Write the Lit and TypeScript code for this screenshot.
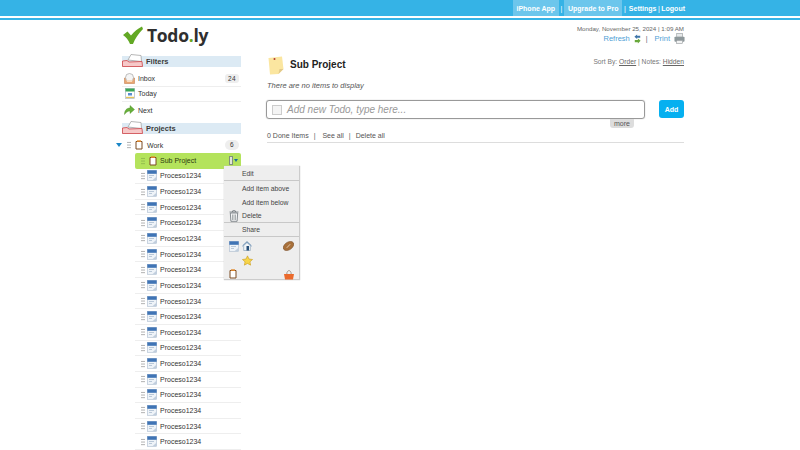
import { LitElement, html, css, svg } from 'lit';
import { customElement } from 'lit/decorators.js';

const folderIcon = html`<svg class="folder" width="21" height="13" viewBox="0 0 21 13">
  <path d="M6 6 L9 0.500 L19 1.500 L19.500 7.500 Z" fill="#fff" stroke="#9a9a9a" stroke-width="0.700"/>
  <path d="M0.500 12.500 L0.500 7 L5 6.500 L7 8 L20 7.500 L20.500 12.500 Z" fill="#f6c9c9" stroke="#cf4145" stroke-width="0.800"/>
</svg>`;

const inboxIcon = html`<svg width="11" height="11" viewBox="0 0 11 11">
  <path d="M0.500 5 L10.500 5 L10.500 10.500 L0.500 10.500 Z" fill="#e8a672" stroke="#c48150" stroke-width="0.600"/>
  <circle cx="5.500" cy="4.500" r="4" fill="#f5f5f5" stroke="#a5a5a5" stroke-width="0.700"/>
  <path d="M2.500 7 L8.500 7 L8 9 L3 9 Z" fill="#f8dcc0"/>
</svg>`;

const todayIcon = html`<svg width="10" height="11" viewBox="0 0 10 11">
  <rect x="0.500" y="0.500" width="9" height="10" fill="#fff" stroke="#9ab" stroke-width="0.600"/>
  <rect x="0.500" y="0.500" width="9" height="3" fill="#3aa655"/>
  <rect x="3" y="5" width="4" height="2.500" fill="#5b8fd0"/>
  <rect x="1" y="8.800" width="8" height="1.300" fill="#e5c45a"/>
</svg>`;

const nextIcon = html`<svg width="11" height="10" viewBox="0 0 11 10">
  <path d="M0.500 9.500 C0.500 5 3 3 6 3 L6 0.500 L10.500 4.500 L6 8.500 L6 6 C3.800 6 2 7.300 0.500 9.500 Z" fill="#67b03a" stroke="#4d8d25" stroke-width="0.400"/>
</svg>`;

const noteIcon = html`<svg width="8" height="10" viewBox="0 0 8 10">
  <path d="M1 1.500 L7 1.500 L7 9 L1 9 Z" fill="#fff" stroke="#7a4a20" stroke-width="1"/>
  <rect x="2" y="0.300" width="4" height="1.600" fill="#e08a30"/>
</svg>`;

const calendarIcon = html`<svg width="10" height="11" viewBox="0 0 10 11">
  <rect x="0.300" y="0.300" width="9.400" height="10" fill="#eef3f8" stroke="#9db0c6" stroke-width="0.500"/>
  <rect x="0.300" y="0.300" width="9.400" height="3.500" fill="#3f74b5"/>
  <rect x="2" y="5" width="5" height="1" fill="#b9c8d8"/>
  <rect x="2" y="7" width="3" height="1" fill="#b9c8d8"/>
  <path d="M5.500 10.300 L9.700 10.300 L9.700 6.500 Z" fill="#c0cedd"/>
</svg>`;

const grip = html`<span class="grip"></span>`;

const trashIcon = html`<svg width="10" height="12" viewBox="0 0 10 12">
  <path d="M0.500 2 L9.500 2 M3.300 2 L3.800 0.700 L6.200 0.700 L6.700 2" fill="none" stroke="#6c7378" stroke-width="0.800"/>
  <path d="M1.300 3 L8.700 3 L8.100 11.300 L1.900 11.300 Z" fill="#f3f4f5" stroke="#6c7378" stroke-width="0.800"/>
  <path d="M3.500 4.500 L3.500 10 M5 4.500 L5 10 M6.500 4.500 L6.500 10" stroke="#8a9094" stroke-width="0.700"/>
</svg>`;

const houseIcon = html`<svg width="10" height="10" viewBox="0 0 10 10">
  <path d="M0.500 5 L5 0.700 L9.500 5" fill="#dfe9f2" stroke="#4e7ba6" stroke-width="1"/>
  <path d="M1.700 4.500 L1.700 9.500 L8.300 9.500 L8.300 4.500 L5 1.700 Z" fill="#f2f5f8" stroke="#7a97b2" stroke-width="0.600"/>
  <rect x="4.500" y="5" width="2.500" height="4.500" fill="#274f78"/>
</svg>`;

const ballIcon = html`<svg width="11" height="10" viewBox="0 0 11 10">
  <ellipse cx="5.500" cy="5" rx="5.800" ry="3.800" transform="rotate(-35 5.500 5)" fill="#a8703a" stroke="#6f4119" stroke-width="0.500"/>
  <path d="M3.800 6.800 L7.200 3.200" stroke="#f1e2cf" stroke-width="0.800"/>
</svg>`;

const starIcon = html`<svg width="11" height="11" viewBox="0 0 13 12">
  <path d="M6.500 0.500 L8.300 4.300 L12.500 4.800 L9.400 7.600 L10.200 11.500 L6.500 9.500 L2.800 11.500 L3.600 7.600 L0.500 4.800 L4.700 4.300 Z" fill="#f7d54a" stroke="#c99a1c" stroke-width="0.700"/>
</svg>`;

const basketIcon = html`<svg width="10" height="11" viewBox="0 0 10 11">
  <path d="M2.800 5 C2.800 0.500 7.200 0.500 7.200 5" fill="none" stroke="#9a8d80" stroke-width="0.900"/>
  <path d="M0 5 L10 5 L9 10.500 L1 10.500 Z" fill="#ea6a2c"/>
</svg>`;

const refreshIcon = html`<svg width="7" height="10" viewBox="0 0 9 11" preserveAspectRatio="none">
  <path d="M4 0.500 L0.500 3 L4 5.500 L4 4 L8 4 L8 2 L4 2 Z" fill="#3f74a8"/>
  <path d="M5 5 L8.500 7.500 L5 10.500 L5 9 L1 9 L1 6.500 L5 6.500 Z" fill="#68a83a"/>
</svg>`;

const printIcon = html`<svg class="printer" width="11" height="11" viewBox="0 0 12 12">
  <rect x="3" y="0.500" width="6.500" height="4" fill="#e6e9ea" stroke="#8b9294" stroke-width="0.600"/>
  <rect x="0.500" y="4" width="11" height="5.500" rx="1" fill="#8e989b"/>
  <rect x="2.500" y="8" width="7" height="3.500" fill="#f2f3f3" stroke="#8b9294" stroke-width="0.600"/>
</svg>`;

const logoCheck = svg`<path d="M0 9 L4.500 5.500 L8 9.500 C11 5.500 15 2.500 19 0.500 L20 3 C15.500 7.500 12 12.500 10 18 L7 18 C5.500 14 3 11 0 9 Z" fill="#62a824"/>`;

@customElement('app-root')
export class AppRoot extends LitElement {
  static styles = css`
    :host {
      display: block;
      width: 800px;
      height: 450px;
      overflow: hidden;
      position: relative;
      background: #fff;
      font-family: 'Liberation Sans', Arial, sans-serif;
      color: #333;
    }
    .topbar {
      height: 16px;
      background: #35b3e6;
      display: flex;
      justify-content: flex-end;
      align-items: stretch;
      padding-right: 115px;
      color: #fff;
      font-size: 7px;
      font-weight: bold;
      border-bottom: 2px solid #fff;
      box-shadow: 0 2px 0 #35b3e6;
    }
    .topbar a {
      display: flex;
      align-items: center;
    }
    .tab {
      background: #6cc6ec;
      padding: 0 3.500px;
    }
    .sep {
      display: flex;
      align-items: center;
      padding: 0 2px;
      font-weight: normal;
    }
    .sep.wide {
      padding: 0 3px 0 2px;
    }
    .sep.tight {
      padding: 0 1.500px;
    }
    .page {
      width: 562px;
      margin-left: 122px;
      display: flex;
      flex-direction: column;
    }
    .head {
      display: flex;
      justify-content: space-between;
      height: 33px;
      padding-top: 5px;
    }
    .logo {
      display: flex;
      align-items: center;
      gap: 4px;
      height: 20px;
      margin-top: 2px;
      margin-left: 1px;
      font-family: 'Open Sans', sans-serif;
      font-size: 17.500px;
      font-weight: 700;
      color: #2f2f2f;
      letter-spacing: -0.300px;
    }
    .logo i {
      font-style: normal;
      color: #6aa61e;
    }
    .stamp {
      text-align: right;
      font-size: 6.200px;
      color: #666;
      padding-top: 2px;
    }
    .actions {
      display: flex;
      justify-content: flex-end;
      align-items: center;
      gap: 4px;
      margin-top: 1px;
      font-size: 7.500px;
      color: #4f9fd6;
    }
    .actions .bar {
      color: #666;
      margin: 0 3px 0 1px;
      font-size: 7px;
    }
    .printer {
      margin-right: -1px;
    }
    .body {
      display: flex;
    }
    .side {
      width: 119px;
      flex: none;
    }
    .sec {
      height: 11px;
      background: #dceaf4;
      position: relative;
      display: flex;
      align-items: center;
      padding-left: 24px;
      font-size: 7.500px;
      font-weight: bold;
      color: #3a3a3a;
    }
    .folder {
      position: absolute;
      left: 0;
      bottom: 0;
    }
    .frow {
      height: 15.650px;
      display: flex;
      align-items: center;
      font-size: 7px;
      color: #333;
      border-bottom: 1px solid #eee;
      box-sizing: border-box;
      padding-left: 2px;
    }
    .frow .ic {
      width: 11px;
      display: flex;
      justify-content: center;
      margin-right: 3px;
    }
    .count {
      margin-left: auto;
      width: 14px;
      height: 9px;
      background: #eee;
      border-radius: 3px;
      font-size: 6.500px;
      line-height: 9px;
      text-align: center;
      letter-spacing: 0.300px;
      margin-right: 2px;
    }
    .filters {
      margin-top: 4px;
      margin-bottom: 5px;
    }
    .filters .frow:last-child {
      border-bottom: 0;
    }
    .projects {
      margin-top: 4px;
    }
    .work {
      height: 15px;
      display: flex;
      align-items: center;
      font-size: 7px;
      margin-left: -6px;
    }
    .tri {
      width: 0;
      height: 0;
      border-left: 3.500px solid transparent;
      border-right: 3.500px solid transparent;
      border-top: 4px solid #1a86c6;
      margin-right: 5px;
    }
    .grip {
      width: 4px;
      height: 8px;
      flex: none;
      background-image: radial-gradient(circle, #a8a8a8 0.700px, transparent 0.900px);
      background-size: 2px 2.700px;
    }
    .work .grip {
      margin-right: 4px;
    }
    .work .ic {
      width: 8px;
      display: flex;
      margin-right: 4px;
    }
    .work .count {
      margin-right: 2px;
      height: 10px;
      line-height: 10px;
      border-radius: 5px;
    }
    .sub {
      margin-left: 13px;
      height: 15.650px;
      display: flex;
      align-items: center;
      background: #b4e35c;
      border-radius: 2px 2px 0 2px;
      font-size: 7px;
      padding-left: 6px;
      color: #2c3a10;
    }
    .sub .grip {
      margin-right: 4px;
      background-image: radial-gradient(circle, #8fb84d 0.700px, transparent 0.900px);
    }
    .sub .ic {
      display: flex;
      margin-right: 3px;
    }
    .sub .ctl {
      margin-left: auto;
      margin-right: 3px;
      display: flex;
      align-items: center;
      gap: 1px;
    }
    .sub .doc {
      width: 2px;
      height: 7px;
      background: #dfe6d8;
      border: 1px solid #7f8f7d;
    }
    .sub .tri {
      border-left-width: 2.500px;
      border-right-width: 2.500px;
      border-top-width: 3px;
      border-top-color: #1a6e9e;
      margin: 0;
    }
    .item {
      margin-left: 13px;
      height: 15.650px;
      box-sizing: border-box;
      display: flex;
      align-items: center;
      font-size: 7px;
      padding-left: 6px;
      border-bottom: 1px solid #eee;
      color: #333;
    }
    .item .grip {
      margin-right: 2px;
    }
    .item svg {
      margin-right: 3px;
    }
    .menu {
      position: absolute;
      left: 224px;
      top: 166px;
      width: 76px;
      height: 114px;
      background: #eee;
      border-right: 1px solid #ccc;
      border-bottom: 1px solid #ccc;
      box-shadow: 0 0 1px #bbb;
      font-size: 6.800px;
      color: #444;
      box-sizing: border-box;
    }
    .menu .mi {
      height: 14px;
      box-sizing: border-box;
      display: flex;
      align-items: center;
      padding-left: 18px;
      position: relative;
    }
    .menu .mi.first {
      height: 15px;
    }
    .menu .rule {
      border-bottom: 1px solid #c8c8c8;
    }
    .menu .mi svg {
      position: absolute;
      left: 5px;
      top: 1px;
    }
    .palette {
      display: grid;
      grid-template-columns: 13px 13px 1fr;
      grid-auto-rows: 14px;
      padding: 2px 5px 0 5px;
      align-items: center;
    }
    .palette .end {
      justify-self: end;
      display: flex;
    }
    .main {
      flex: 1;
      margin-left: 26px;
      margin-top: -3px;
      display: flex;
      flex-direction: column;
    }
    .titlerow {
      display: flex;
      align-items: center;
      justify-content: space-between;
      height: 22px;
    }
    .title {
      display: flex;
      align-items: center;
      gap: 5px;
      font-size: 10px;
      font-weight: bold;
      color: #222;
    }
    .title svg {
      margin-top: 3px;
    }
    .sort {
      font-size: 6.700px;
      color: #777;
      align-self: flex-start;
      margin-top: 5px;
    }
    .sort u {
      color: #666;
    }
    .empty {
      font-size: 7.500px;
      font-style: italic;
      color: #555;
      margin-top: 6px;
    }
    .addrow {
      display: flex;
      justify-content: space-between;
      margin-top: 10px;
      position: relative;
    }
    .input {
      width: 379px;
      height: 19px;
      margin-left: -1px;
      border: 1px solid #999;
      border-radius: 3px;
      box-sizing: border-box;
      display: flex;
      align-items: center;
      padding-left: 5px;
      gap: 5px;
      font-size: 10px;
      font-style: italic;
      color: #999;
      box-shadow: 0 0 1px #999;
    }
    .box {
      width: 8px;
      height: 8px;
      border: 1px solid #ccc;
      background: #f4f4f4;
    }
    .add {
      width: 25px;
      height: 18px;
      background: #06b0f0;
      border-radius: 3px;
      color: #fff;
      font-size: 7px;
      font-weight: bold;
      display: flex;
      align-items: center;
      justify-content: center;
    }
    .more {
      position: absolute;
      left: 343px;
      top: 19px;
      width: 24px;
      height: 9px;
      background: #ddd;
      border-radius: 0 0 3px 3px;
      font-size: 7px;
      line-height: 9px;
      text-align: center;
      color: #555;
    }
    .done {
      margin-top: 13px;
      font-size: 7px;
      color: #555;
      padding-bottom: 2px;
      border-bottom: 1px solid #ddd;
      height: 8px;
      line-height: 8px;
      display: flex;
    }
    .done .bar {
      margin: 0 5px;
    }
  `;

  render() {
    const rows = Array.from({ length: 18 });
    return html`
      <div class="topbar">
        <a class="tab">iPhone App</a><span class="sep">|</span>
        <a class="tab">Upgrade to Pro</a><span class="sep wide">|</span>
        <a>Settings</a><span class="sep tight">|</span><a>Logout</a>
      </div>
      <div class="page">
        <div class="head">
          <div class="logo">
            <svg width="20" height="18" viewBox="0 0 20 18">${logoCheck}</svg>
            <span>Todo<i>.</i>ly</span>
          </div>
          <div class="stamp">
            Monday, November 25, 2024 | 1:09 AM
            <div class="actions">
              <span>Refresh</span>${refreshIcon}<span class="bar">|</span><span>Print</span>${printIcon}
            </div>
          </div>
        </div>
        <div class="body">
          <div class="side">
            <div class="sec">${folderIcon}Filters</div>
            <div class="filters">
              <div class="frow"><span class="ic">${inboxIcon}</span>Inbox<span class="count">24</span></div>
              <div class="frow"><span class="ic">${todayIcon}</span>Today</div>
              <div class="frow"><span class="ic">${nextIcon}</span>Next</div>
            </div>
            <div class="sec">${folderIcon}Projects</div>
            <div class="projects">
              <div class="work">
                <span class="tri"></span>${grip}
                <span class="ic">${noteIcon}</span>Work<span class="count">6</span>
              </div>
              <div class="sub">
                ${grip}<span class="ic">${noteIcon}</span>Sub Project
                <span class="ctl"><span class="doc"></span><span class="tri"></span></span>
              </div>
              ${rows.map(() => html`<div class="item">${grip}${calendarIcon}Proceso1234</div>`)}
            </div>
          </div>
          <div class="main">
            <div class="titlerow">
              <div class="title">
                <svg width="18" height="19" viewBox="0 0 18 19">
                  <path d="M1.500 2 L15 0.500 L16.500 13 L11.500 18 L3 18.500 Z" fill="#fbe6a0"/>
                  <path d="M11.500 18 L12.500 13 L16.500 13 Z" fill="#e2c98a"/>
                  <circle cx="7.500" cy="3" r="1" fill="#b3392f"/>
                </svg>
                Sub Project
              </div>
              <div class="sort">Sort By: <u>Order</u> | Notes: <u>Hidden</u></div>
            </div>
            <div class="empty">There are no items to display</div>
            <div class="addrow">
              <div class="input"><span class="box"></span>Add new Todo, type here...</div>
              <div class="add">Add</div>
              <div class="more">more</div>
            </div>
            <div class="done">
              <span>0 Done Items</span><span class="bar">|</span><span>&nbsp;See all</span><span class="bar">|</span><span>Delete all</span>
            </div>
          </div>
        </div>
      </div>
      <div class="menu">
        <div class="mi first rule">Edit</div>
        <div class="mi">Add item above</div>
        <div class="mi">Add item below</div>
        <div class="mi rule">${trashIcon}Delete</div>
        <div class="mi rule">Share</div>
        <div class="palette">
          ${calendarIcon}${houseIcon}<span class="end">${ballIcon}</span>
          <span></span>${starIcon}<span></span>
          ${noteIcon}<span></span><span class="end">${basketIcon}</span>
        </div>
      </div>
    `;
  }
}
